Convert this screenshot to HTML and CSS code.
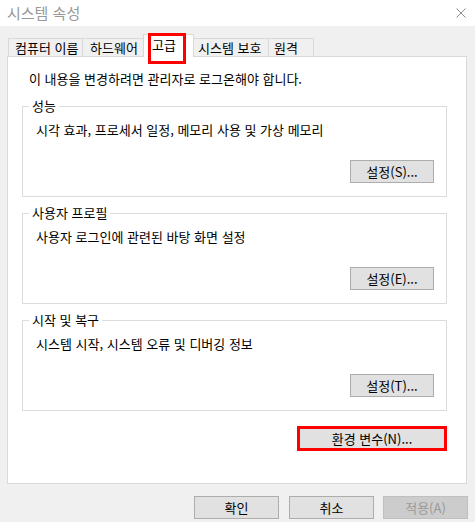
FILE: index.html
```html
<!DOCTYPE html>
<html lang="ko">
<head>
<meta charset="utf-8">
<title>시스템 속성</title>
<link rel="stylesheet" href="styles.css">
</head>
<body>
<div class="window">
  <div class="titlebar">
    <span class="title">시스템 속성</span>
    <svg class="close" width="10" height="10" viewBox="0 0 10 10"><path d="M0.5 0.5 L9.5 9.5 M9.5 0.5 L0.5 9.5" stroke="#8c8c8c" stroke-width="1" fill="none"/></svg>
  </div>
  <div class="content">
    <div class="tabs">
      <div class="tab tab-computer">컴퓨터 이름</div>
      <div class="tab tab-hardware">하드웨어</div>
      <div class="tab tab-active">고급<span class="highlight"></span></div>
      <div class="tab tab-protect">시스템 보호</div>
      <div class="tab tab-remote">원격</div>
    </div>
    <div class="pane">
      <p class="notice">이 내용을 변경하려면 관리자로 로그온해야 합니다.</p>
      <fieldset class="group">
        <legend>성능</legend>
        <div class="group-body">
          <p class="desc">시각 효과, 프로세서 일정, 메모리 사용 및 가상 메모리</p>
          <div class="group-actions"><button class="btn">설정(S)...</button></div>
        </div>
      </fieldset>
      <fieldset class="group">
        <legend>사용자 프로필</legend>
        <div class="group-body">
          <p class="desc">사용자 로그인에 관련된 바탕 화면 설정</p>
          <div class="group-actions"><button class="btn">설정(E)...</button></div>
        </div>
      </fieldset>
      <fieldset class="group">
        <legend>시작 및 복구</legend>
        <div class="group-body">
          <p class="desc">시스템 시작, 시스템 오류 및 디버깅 정보</p>
          <div class="group-actions"><button class="btn">설정(T)...</button></div>
        </div>
      </fieldset>
      <div class="env-row"><button class="btn btn-env">환경 변수(N)...</button></div>
    </div>
    <div class="footer">
      <button class="btn btn-footer btn-ok">확인</button>
      <button class="btn btn-footer">취소</button>
      <button class="btn btn-footer btn-disabled">적용(A)</button>
    </div>
  </div>
</div>
</body>
</html>
```
FILE: styles.css
```css
html, body {
  margin: 0;
  padding: 0;
}
body {
  background: #f0f0f0;
  font-family: "Noto Sans CJK KR", "Noto Sans", sans-serif;
  font-size: 13px;
  color: #000;
}
.window {
  width: 475px;
  height: 522px;
  overflow: hidden;
  background: #f0f0f0;
}
.titlebar {
  height: 26px;
  background: #fff;
  display: flex;
  align-items: center;
  justify-content: space-between;
  padding: 0 9px 0 7px;
  box-sizing: border-box;
}
.title {
  font-size: 15px;
  line-height: 18px;
  color: #999;
}
.close {
  display: block;
}
.content {
  padding-top: 8px;
}
.tabs {
  display: flex;
  align-items: flex-end;
  margin-left: 8px;
  height: 22px;
}
.tab {
  box-sizing: border-box;
  height: 18px;
  border: 1px solid #d9d9d9;
  border-bottom: none;
  background: #f0f0f0;
  line-height: 15px;
  padding-top: 1px;
  padding-left: 6px;
  white-space: nowrap;
  margin-left: -1px;
}
.tab-computer {
  width: 75px;
  margin-left: 0;
}
.tab-hardware {
  width: 62px;
  padding-left: 7px;
}
.tab-active {
  position: relative;
  z-index: 1;
  width: 51px;
  height: 23px;
  margin-bottom: -1px;
  background: #fff;
  padding-top: 2px;
  padding-left: 8px;
}
.tab-protect {
  width: 76px;
  padding-left: 4px;
}
.tab-remote {
  width: 46px;
  padding-left: 5px;
}
.highlight {
  position: absolute;
  left: 4px;
  top: -2px;
  width: 38px;
  height: 31px;
  border: 3px solid #f00;
  box-sizing: border-box;
}
.pane {
  margin-left: 7px;
  width: 460px;
  box-sizing: border-box;
  border: 1px solid #d9d9d9;
  background: #fff;
  padding: 14px 19px 33px 14px;
}
.notice {
  margin: 0;
  line-height: 16px;
  padding-left: 7px;
}
.group {
  margin: 9px 0 0 0;
  padding: 0;
  border: 1px solid #dcdcdc;
  min-width: 0;
}
.notice + .group {
  margin-top: 12px;
}
.group legend {
  margin-left: 6px;
  padding: 0 3px;
  line-height: 14px;
}
.group-body {
  padding: 9px 12px 13px 13px;
}
.desc {
  margin: 0;
  line-height: 16px;
}
.group-actions {
  display: flex;
  justify-content: flex-end;
  margin-top: 22px;
}
.btn {
  box-sizing: border-box;
  width: 84px;
  height: 23px;
  background: #e1e1e1;
  border: 1px solid #adadad;
  font-family: inherit;
  font-size: 13px;
  color: #000;
  padding: 0;
  line-height: 21px;
  margin: 0;
}
.env-row {
  display: flex;
  justify-content: flex-end;
  margin-top: 16px;
}
.btn-env {
  width: 148px;
  margin-right: 1px;
  outline: 3px solid #f00;
  outline-offset: -2px;
}
.footer {
  display: flex;
  justify-content: flex-end;
  gap: 9px;
  padding-right: 7px;
  margin-top: 12px;
}
.btn-footer {
  width: 85px;
}
.btn-ok {
  margin-right: 1px;
}
.btn-disabled {
  background: #cccccc;
  border-color: #bfbfbf;
  color: #9a9a9a;
}
```
